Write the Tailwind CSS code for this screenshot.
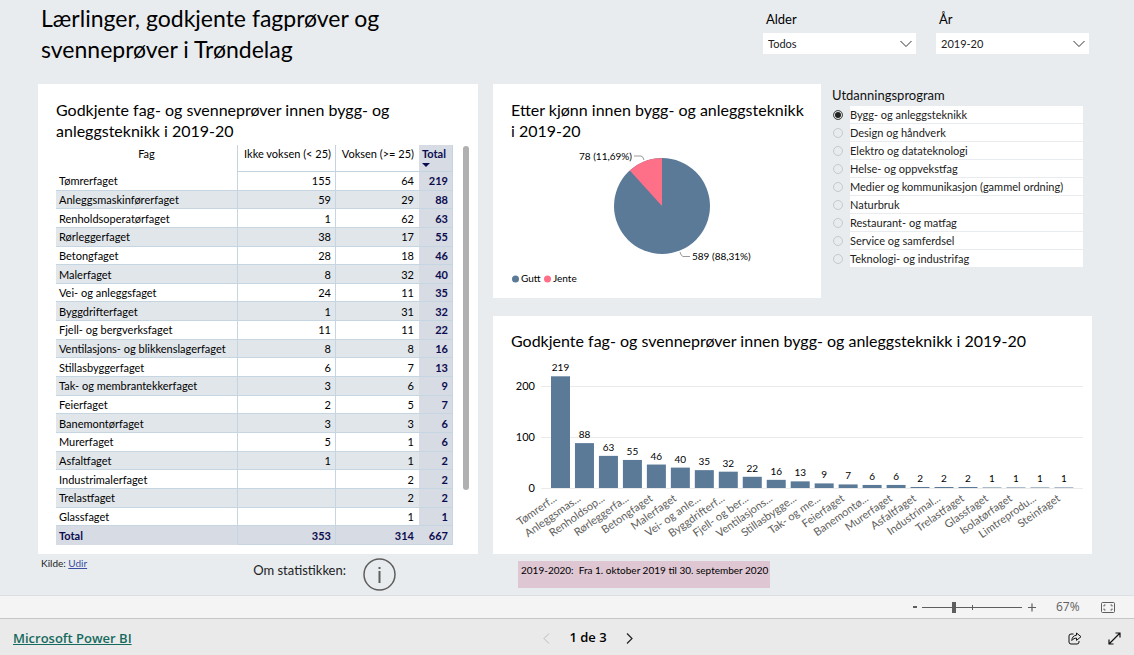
<!DOCTYPE html>
<html lang="no">
<head>
<meta charset="utf-8">
<title>Lærlinger, godkjente fagprøver og svenneprøver i Trøndelag</title>
<script src="https://cdn.jsdelivr.net/npm/@tailwindcss/browser@4"></script>
</head>
<body class="flex min-h-screen flex-col bg-[#e8ecef] font-['Lato','Liberation_Sans',sans-serif] text-black">
<main class="flex-1 pr-[42px] pl-[38px]">
  <header class="flex h-[84px] items-start justify-between pt-[3px] pr-[3px] pl-[3px]">
    <h1 class="w-[400px] text-[23px] leading-[31px]">Lærlinger, godkjente fagprøver og svenneprøver i Trøndelag</h1>
    <div class="flex gap-5 pt-[6px]">
      <div class="w-[153px]">
        <label for="alder" class="block pl-[3px] text-[13px] leading-5">Alder</label>
        <div class="relative mt-1">
          <select id="alder" class="block h-[21px] w-full appearance-none bg-white pt-px pl-[5px] text-[11px] text-[#212121]"><option>Todos</option></select>
          <svg class="pointer-events-none absolute top-[7px] right-1" width="12" height="8" viewBox="0 0 12 8" fill="none" stroke="#333"><path d="M.5 1 6 6.500 11.500 1"/></svg>
        </div>
      </div>
      <div class="w-[153px]">
        <label for="ar" class="block pl-[3px] text-[13px] leading-5">År</label>
        <div class="relative mt-1">
          <select id="ar" class="block h-[21px] w-full appearance-none bg-white pt-px pl-[5px] text-[11px] text-[#212121]"><option>2019-20</option></select>
          <svg class="pointer-events-none absolute top-[7px] right-1" width="12" height="8" viewBox="0 0 12 8" fill="none" stroke="#333"><path d="M.5 1 6 6.500 11.500 1"/></svg>
        </div>
      </div>
    </div>
  </header>

  <div class="grid grid-cols-[440fr_599fr] gap-x-[15px]">
    <section class="bg-white pt-[15px] pr-[9px] pb-[9px] pl-[18px]">
      <h2 class="w-[360px] text-[16px] leading-[21px]">Godkjente fag- og svenneprøver innen bygg- og anleggsteknikk i 2019-20</h2>
      <div class="mt-1 flex gap-[10px]">
        <table class="h-[400px] flex-1 table-fixed border-separate border-spacing-0 text-[11px] leading-[14px]">
          <colgroup><col><col class="w-[98px]"><col class="w-[83px]"><col class="w-[34px]"></colgroup>
          <thead>
            <tr class="h-[27px] align-top">
              <th class="border-r border-[#c3d3e0] pt-[2px] font-normal">Fag</th>
              <th class="border-r border-b border-[#c3d3e0] pt-[2px] pr-1 text-right font-normal whitespace-nowrap">Ikke voksen (&lt; 25)</th>
              <th class="border-b border-[#c3d3e0] pt-[2px] pr-[5px] text-right font-normal whitespace-nowrap">Voksen (&gt;= 25)</th>
              <th class="border-r border-b border-[#c3d3e0] bg-[#d7dbe3] pt-[2px] pl-[3px] text-left font-bold text-[#0c0c50]">Total
                <svg class="mt-[2px] block" width="8" height="4" viewBox="0 0 8 4"><path d="M0 0h8L4 4z" fill="#0c0c50"/></svg>
              </th>
            </tr>
          </thead>
          <tbody id="rows"></tbody>
        </table>
        <div class="mt-px h-[344px] w-[6px] rounded-full bg-[#b0b0b0]"></div>
      </div>
    </section>

    <div class="flex flex-col gap-[18px]">
      <div class="flex">
        <section class="min-w-[328px] flex-[328] bg-white pt-[15px]">
          <h2 class="pb-px pl-[18px] text-[16px] leading-[21px]">Etter kjønn innen bygg- og anleggsteknikk<br>i 2019-20</h2>
          <svg class="block w-full" viewBox="493 142 328 156" font-size="10" role="img" aria-label="Etter kjønn">
            <circle cx="662" cy="206" r="48" fill="#5a7a98"/>
            <path d="M662 206V158A48 48 0 0 0 629.800 170.400z" fill="#fd7088"/>
            <path d="M634 156h7q2 0 3 4M680 252q1 4 3 4.500h7" fill="none" stroke="#999"/>
            <text x="632" y="160" text-anchor="end">78 (11,69%)</text>
            <text x="692" y="260">589 (88,31%)</text>
            <circle cx="515.500" cy="279" r="3.500" fill="#5a7a98"/><text x="521" y="282">Gutt</text>
            <circle cx="547.500" cy="279" r="3.500" fill="#fd7088"/><text x="553" y="282">Jente</text>
          </svg>
        </section>
        <fieldset class="flex-[271] pr-[9px] pl-[11px]">
          <legend class="pt-[1px] text-[13px] leading-5 text-[#111]">Utdanningsprogram</legend>
          <div id="programs" class="flex flex-col gap-px pt-[1px]"></div>
        </fieldset>
      </div>
      <section class="flex-1 bg-white pt-[14px]">
        <h2 class="pb-[2px] pl-[18px] text-[16px] leading-[21px]">Godkjente fag- og svenneprøver innen bygg- og anleggsteknikk i 2019-20</h2>
        <svg id="chart" class="block w-full" viewBox="493 353 599 201" font-size="10" role="img" aria-label="Godkjente fag- og svenneprøver per fag"></svg>
      </section>
    </div>

    <div class="flex items-start pr-[82px] pl-[3px]">
      <p class="pt-[2px] text-[10px] leading-[14px] text-[#222]">Kilde: <a href="#" class="text-[#3a4fa0] underline">Udir</a></p>
      <p class="mr-[17px] ml-auto pt-2 text-[13px] leading-4 text-[#222]">Om statistikken:</p>
      <button aria-label="Om statistikken" class="pt-1">
        <svg width="33" height="33" viewBox="0 0 33 33" fill="none" stroke="#605e5c" stroke-width="1.500"><circle cx="16.500" cy="16.500" r="15.500"/><path d="M16.500 13v12M16.500 9v2" stroke-width="2"/></svg>
      </button>
    </div>
    <p class="mt-[7px] ml-[25px] h-[27px] w-[252px] bg-[#dec7d3] pt-[2px] pl-[3px] text-[10px] leading-[14px] whitespace-pre">2019-2020:  Fra 1. oktober 2019 til 30. september 2020</p>
  </div>
</main>

<div class="flex h-[23px] items-center justify-end border-t border-[#dcdfe1] bg-[#f4f4f4] pr-[19px] font-['Open_Sans',sans-serif] text-[#605e5c]">
  <button aria-label="Zoom ut" class="mr-1 flex"><svg width="6" height="10" viewBox="0 0 6 10"><path d="M1 5h4" stroke="#605e5c" stroke-width="2"/></svg></button>
  <div class="relative h-[13px] w-[100px]">
    <input type="range" aria-label="Zoom" min="0" max="100" value="32" class="absolute inset-0 h-full w-full opacity-0">
    <svg class="pointer-events-none block" width="100" height="13" viewBox="0 0 100 13" fill="#605e5c"><path d="M0 6h100v1H0zM30 1h4v11h-4zM50 4h1v5h-1z"/></svg>
  </div>
  <button aria-label="Zoom inn" class="ml-[6px] flex"><svg width="8" height="9" viewBox="0 0 8 9"><path d="M0 4.500h8M4 .5v8" stroke="#605e5c" stroke-width="1.200"/></svg></button>
  <span class="ml-5 w-[24px] text-[12px] leading-4">67%</span>
  <button aria-label="Tilpass til siden" class="ml-[21px] flex"><svg width="14" height="11" viewBox="0 0 14 11" fill="none" stroke="#605e5c"><rect x=".5" y=".5" width="13" height="10" rx="1"/><path d="M3 4.500V3h1.500M9.500 3H11v1.500M11 6.500V8H9.500M4.500 8H3V6.500"/></svg></button>
</div>

<footer class="grid h-[37px] grid-cols-3 items-center border-t border-[#c6c6c6] bg-[#eaeaea] pr-[13px] pl-[13px] font-['Open_Sans',sans-serif]">
  <a href="#" class="pt-[3px] text-[13px] font-semibold text-[#166a5e] underline">Microsoft Power BI</a>
  <nav class="flex items-center justify-center gap-[19px] pt-[2px] pl-[42px]">
    <button aria-label="Forrige side" disabled><svg width="7" height="11" viewBox="0 0 7 11" fill="none" stroke="#bbb"><path d="M6 .5 1 5.500l5 5"/></svg></button>
    <span class="text-[13px] font-semibold">1 de 3</span>
    <button aria-label="Neste side"><svg width="7" height="11" viewBox="0 0 7 11" fill="none" stroke="#222" stroke-width="1.200"><path d="m1 .5 5 5-5 5"/></svg></button>
  </nav>
  <div class="flex items-center justify-end gap-[26px] pt-[2px]">
    <button aria-label="Del"><svg width="14" height="13" viewBox="0 0 14 13" fill="none" stroke="#111" stroke-linejoin="round"><path d="M5.500 2H3Q1 2 1 4v6q0 2 2 2h6q2 0 2-2V9"/><path d="M8.500 1v2.200C5.500 3.400 4 5.500 3.800 8.500c1.400-1.700 2.700-2.400 4.700-2.400v2.300L13 4.700z"/></svg></button>
    <button aria-label="Fullskjerm"><svg width="13" height="13" viewBox="0 0 13 13" fill="none" stroke="#111" stroke-width="1.200"><path d="M7.500 1H12v4.500M12 1 1 12M1 7.500V12h4.500"/></svg></button>
  </div>
</footer>

<script>
const data = [
  ["Tømrerfaget", 155, 64, 219], ["Anleggsmaskinførerfaget", 59, 29, 88], ["Renholdsoperatørfaget", 1, 62, 63],
  ["Rørleggerfaget", 38, 17, 55], ["Betongfaget", 28, 18, 46], ["Malerfaget", 8, 32, 40], ["Vei- og anleggsfaget", 24, 11, 35],
  ["Byggdrifterfaget", 1, 31, 32], ["Fjell- og bergverksfaget", 11, 11, 22], ["Ventilasjons- og blikkenslagerfaget", 8, 8, 16],
  ["Stillasbyggerfaget", 6, 7, 13], ["Tak- og membrantekkerfaget", 3, 6, 9], ["Feierfaget", 2, 5, 7], ["Banemontørfaget", 3, 3, 6],
  ["Murerfaget", 5, 1, 6], ["Asfaltfaget", 1, 1, 2], ["Industrimalerfaget", "", 2, 2], ["Trelastfaget", "", 2, 2], ["Glassfaget", "", 1, 1]
];
const cell = "border-r border-b border-[#c6d5e2] pt-px text-right ";
document.getElementById("rows").innerHTML = data.map((r, i) => `
  <tr class="${i % 2 ? "bg-[#e1e6ea]" : "bg-white"}">
    <td class="border-r border-b border-[#c6d5e2] pt-px pl-[3px] whitespace-nowrap">${r[0]}</td>
    <td class="${cell}pr-1">${r[1]}</td>
    <td class="border-b border-[#c6d5e2] pt-px pr-[5px] text-right">${r[2]}</td>
    <td class="${cell}bg-[#d7dbe3] pr-1 font-bold text-[#0c0c50]">${r[3]}</td>
  </tr>`).join("") + `
  <tr class="bg-[#d7dbe3] font-bold text-[#0c0c50]">
    <td class="border-r border-b border-r-[#c6d5e2] border-b-transparent pt-px pl-[3px]">Total</td>
    <td class="${cell}pr-1">353</td>
    <td class="border-b border-[#c6d5e2] pt-px pr-[5px] text-right">314</td>
    <td class="${cell}pr-1">667</td>
  </tr>`;

document.getElementById("programs").innerHTML = ["Bygg- og anleggsteknikk", "Design og håndverk", "Elektro og datateknologi",
  "Helse- og oppvekstfag", "Medier og kommunikasjon (gammel ordning)", "Naturbruk", "Restaurant- og matfag",
  "Service og samferdsel", "Teknologi- og industrifag"].map((name, i) => `
  <label class="flex items-center gap-[7px] text-[11px] leading-[17px] text-[#212121]">
    <input type="radio" name="program" ${i ? "" : "checked"} class="ml-px size-[10px] shrink-0 appearance-none rounded-full border border-[#c8c8c8] checked:border-[#555] checked:bg-[#212121] checked:shadow-[inset_0_0_0_1px_#e8ecef]">
    <span class="flex-1 bg-white whitespace-nowrap">${name}</span>
  </label>`).join("");

const bars = [["Tømrerf...", 219], ["Anleggsmas...", 88], ["Renholdsop...", 63], ["Rørleggerfa...", 55], ["Betongfaget", 46],
  ["Malerfaget", 40], ["Vei- og anle...", 35], ["Byggdrifterf...", 32], ["Fjell- og ber...", 22], ["Ventilasjons...", 16],
  ["Stillasbygge...", 13], ["Tak- og me...", 9], ["Feierfaget", 7], ["Banemontø...", 6], ["Murerfaget", 6], ["Asfaltfaget", 2],
  ["Industrimal...", 2], ["Trelastfaget", 2], ["Glassfaget", 1], ["Isolatørfaget", 1], ["Limtreprodu...", 1], ["Steinfaget", 1]];
let svg = [0, 100, 200].map(v => {
  const y = 488 - v * 0.51;
  return `<path d="M541 ${y + 0.5}h542" stroke="#eaeaea"/><text x="535" y="${y + 4}" text-anchor="end" font-size="11">${v}</text>`;
}).join("");
bars.forEach(([name, v], i) => {
  const cx = 560.5 + i * 23.97, h = v * 0.51;
  svg += `<rect x="${cx - 9.5}" y="${488 - h}" width="19" height="${h}" fill="#5a7a98"/>
    <text x="${cx}" y="${483 - h}" text-anchor="middle">${v}</text>
    <text transform="translate(${cx - 3} 500) rotate(-35)" text-anchor="end" font-size="11" fill="#605e5c">${name}</text>`;
});
document.getElementById("chart").innerHTML = svg;
</script>
</body>
</html>
